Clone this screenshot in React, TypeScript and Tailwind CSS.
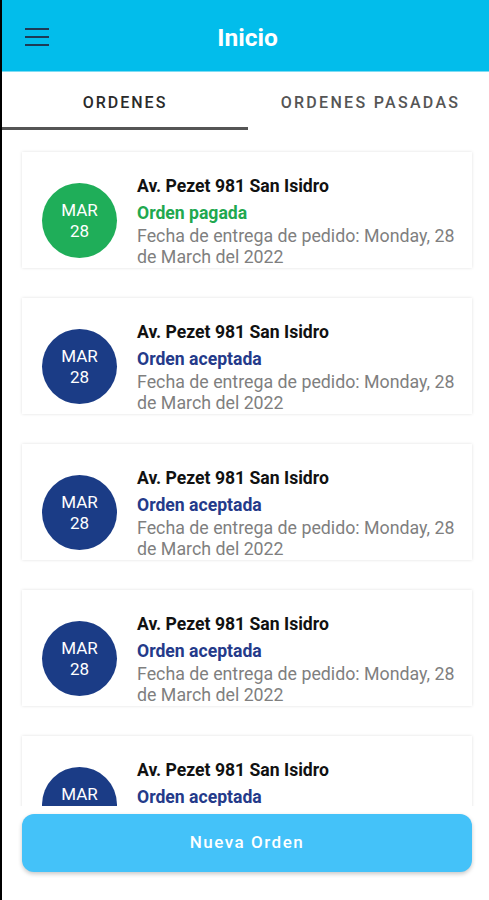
import React from "react";

type Order = { status: string; paid: boolean };

const orders: Order[] = [
  { status: "Orden pagada", paid: true },
  { status: "Orden aceptada", paid: false },
  { status: "Orden aceptada", paid: false },
  { status: "Orden aceptada", paid: false },
  { status: "Orden aceptada", paid: false },
];

function OrderCard({ o }: { o: Order }) {
  return (
    <div className="h-[116px] shrink-0 bg-white shadow-[0_0_3px_rgba(0,0,0,0.13)] flex items-center pl-[20px] pr-[4px] pt-[21px] overflow-hidden">
      <div
        className={`w-[75px] h-[75px] shrink-0 rounded-full flex flex-col items-center justify-center text-white text-[17px] leading-[21px] ${
          o.paid ? "bg-[#1fae59]" : "bg-[#1b3c86]"
        }`}
      >
        <span>MAR</span>
        <span>28</span>
      </div>
      <div className="ml-[20px] w-[330px] flex flex-col">
        <div className="text-[17.6px] leading-[22px] font-bold text-[#111]">Av. Pezet 981 San Isidro</div>
        <div
          className={`mt-[4px] text-[17.6px] leading-[24px] font-bold ${
            o.paid ? "text-[#21a84f]" : "text-[#243a8a]"
          }`}
        >
          {o.status}
        </div>
        <div className="text-[17.8px] leading-[21px] text-[#7f7f7f]">
          Fecha de entrega de pedido: Monday, 28 de March del 2022
        </div>
      </div>
    </div>
  );
}

export default function App() {
  return (
    <div
      className="w-[489px] h-[900px] overflow-hidden flex flex-col bg-white border-l-2 border-black"
      style={{ fontFamily: "Roboto, 'Noto Sans', sans-serif" }}
    >
      <header className="h-[71px] shrink-0 bg-[#02bdeb] relative flex items-center justify-center">
        <svg className="absolute left-[23px] top-[28px]" width="24" height="18" viewBox="0 0 24 18">
          <rect x="0" y="0" width="24" height="2" fill="#1d3b55" />
          <rect x="0" y="8" width="24" height="2" fill="#1d3b55" />
          <rect x="0" y="16" width="24" height="2" fill="#1d3b55" />
        </svg>
        <h1 className="text-white text-[24.5px] font-bold ml-[4px] mt-[6px]">Inicio</h1>
      </header>
      <div className="h-[60px] shrink-0 flex border-t border-[#7fdcf3]">
        <div className="w-[246px] shrink-0 flex flex-col">
          <div className="flex-1 flex items-center justify-center text-[16px] font-medium tracking-[2px] text-[#2a2a2a] pt-[6px]">
            ORDENES
          </div>
          <div className="h-[3px] bg-[#555] mb-[1px]" />
        </div>
        <div className="flex-1 flex items-center justify-center text-[16px] font-medium tracking-[2.3px] text-[#555] pt-[2px]">
          <span className="ml-[4px]">ORDENES PASADAS</span>
        </div>
      </div>
      <div className="h-[675px] shrink-0 overflow-hidden flex flex-col gap-[30px] pt-[21px] pl-[20px] pr-[17px]">
        {orders.map((o, i) => (
          <OrderCard key={i} o={o} />
        ))}
      </div>
      <div className="flex-1 pt-[8px] pl-[20px] pr-[17px]">
        <button className="w-full h-[58px] rounded-[12px] bg-[#44c2f9] text-white text-[17px] font-medium tracking-[1.5px] shadow-[0_2px_4px_rgba(0,0,0,0.22)]">
          Nueva Orden
        </button>
      </div>
    </div>
  );
}
